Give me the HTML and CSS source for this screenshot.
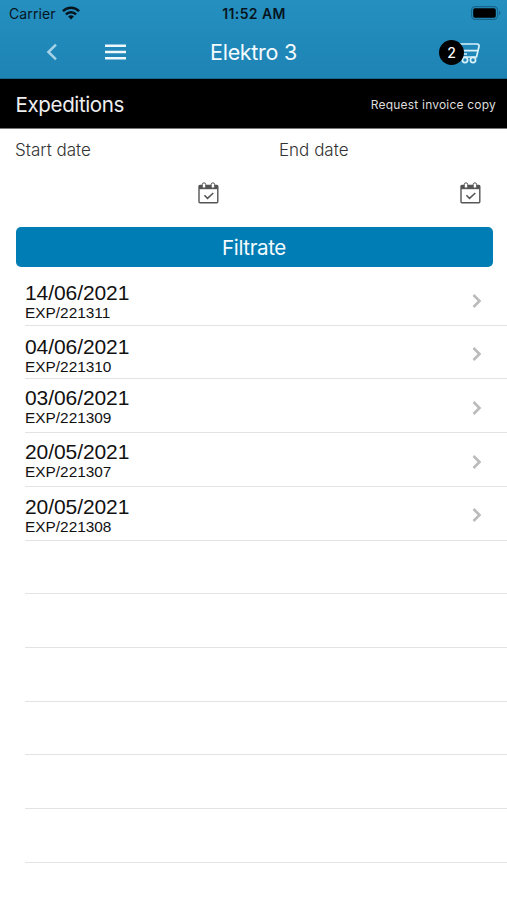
FILE: index.html
```html
<!DOCTYPE html>
<html lang="en">
<head>
<meta charset="utf-8">
<title>Elektro 3</title>
<link rel="stylesheet" href="styles.css">
</head>
<body>
<header class="top">
  <div class="status">
    <div class="carrier"><span>Carrier</span>
      <svg class="wifi" width="18" height="14" viewBox="0 0 18 14"><g fill="none" stroke="#06151d" stroke-width="2.5"><path d="M.9 5.2C5.4.5 12.6.5 17.1 5.2"/><path d="M3.9 8.3C6.7 5.4 11.3 5.4 14.1 8.3"/></g><path d="M6.1 10.5Q9 8 11.9 10.5L9 13.6Z" fill="#06151d"/></svg>
    </div>
    <div class="time">11:52 AM</div>
    <div class="power">
      <svg width="30" height="14" viewBox="0 0 30 14"><rect x=".6" y=".6" width="26" height="12.8" rx="3.6" fill="none" stroke="#17658a" stroke-width="1.1"/><rect x="2.2" y="2.2" width="22.6" height="9.6" rx="1.8"/><path d="M28 4.8q3 2.2 0 4.4z" fill="#17658a"/></svg>
    </div>
  </div>
  <nav class="nav">
    <div class="nav-left">
      <svg class="back" width="12" height="18" viewBox="0 0 12 18"><path d="M10 1.600 2.400 9 10 16.400" fill="none" stroke="#a5d2e6" stroke-width="2.500"/></svg>
      <svg class="menu" width="21" height="16" viewBox="0 0 21 16"><path d="M0 1.800h21M0 8h21M0 14.200h21" stroke="#eef8fc" stroke-width="2.400"/></svg>
    </div>
    <h1>Elektro 3</h1>
    <div class="cart">
      <svg width="28" height="22" viewBox="0 0 28 22"><g fill="none" stroke="#d9f1fa" stroke-width="1.700"><path d="M1 1h3l6 14h14.500L27 4.500Q27.200 2 25 2H6M9 8.700h17M11 12h4"/><circle cx="13" cy="18" r="2.600"/><circle cx="21" cy="18" r="2.600"/></g></svg>
      <span class="badge">2</span>
    </div>
  </nav>
</header>
<div class="bar"><h2>Expeditions</h2><span class="copy">Request invoice copy</span></div>
<section class="filter">
  <div class="field"><label>Start date</label>
    <svg class="cal" width="21" height="22" viewBox="0 0 21 22"><path d="M1 3h19v4.200H1z" fill="#555"/><rect x="1" y="3.500" width="18.800" height="17.300" rx="1" fill="none" stroke="#555" stroke-width="1.400"/><g fill="#fff" stroke="#555"><rect x="4.300" y=".8" width="3.400" height="5.400" rx="1.700"/><rect x="13.200" y=".8" width="3.400" height="5.400" rx="1.700"/></g><path d="m6.400 13.300 3.100 3.100 5.800-5.400" fill="none" stroke="#555" stroke-width="1.500"/></svg>
  </div>
  <div class="field"><label>End date</label>
    <svg class="cal end" width="21" height="22" viewBox="0 0 21 22"><path d="M1 3h19v4.200H1z" fill="#555"/><rect x="1" y="3.500" width="18.800" height="17.300" rx="1" fill="none" stroke="#555" stroke-width="1.400"/><g fill="#fff" stroke="#555"><rect x="4.300" y=".8" width="3.400" height="5.400" rx="1.700"/><rect x="13.200" y=".8" width="3.400" height="5.400" rx="1.700"/></g><path d="m6.400 13.300 3.100 3.100 5.800-5.400" fill="none" stroke="#555" stroke-width="1.500"/></svg>
  </div>
</section>
<button class="submit">Filtrate</button>
<ul class="list">
  <li><div class="entry low"><b>14/06/2021</b><span>EXP/221311</span></div><svg class="go" width="10" height="16" viewBox="0 0 10 16"><path d="m1.500 2 6 6-6 6" /></svg></li>
  <li><div class="entry low"><b>04/06/2021</b><span>EXP/221310</span></div><svg class="go" width="10" height="16" viewBox="0 0 10 16"><path d="m1.500 2 6 6-6 6" /></svg></li>
  <li><div class="entry high"><b>03/06/2021</b><span>EXP/221309</span></div><svg class="go" width="10" height="16" viewBox="0 0 10 16"><path d="m1.500 2 6 6-6 6" /></svg></li>
  <li><div class="entry high"><b>20/05/2021</b><span>EXP/221307</span></div><svg class="go" width="10" height="16" viewBox="0 0 10 16"><path d="m1.500 2 6 6-6 6" /></svg></li>
  <li><div class="entry"><b>20/05/2021</b><span>EXP/221308</span></div><svg class="go" width="10" height="16" viewBox="0 0 10 16"><path d="m1.500 2 6 6-6 6" /></svg></li>
  <li></li><li></li><li></li><li></li><li></li><li></li>
</ul>
</body>
</html>
```
FILE: styles.css
```css
* { box-sizing: border-box; }
body { margin: 0; height: 900px; overflow: hidden; background: #fff; color: #111; font-family: Inter, "Liberation Sans", sans-serif; }
svg { display: block; flex: none; }
h1, h2 { margin: 0; font-weight: 400; }
.top { height: 79px; background: linear-gradient(#2590c0, #1d83b4); border-bottom: 1px solid #14688f; }
.status, .nav { display: grid; grid-template-columns: 1fr auto 1fr; align-items: center; }
.status { height: 27px; padding: 0 8px 0 9px; color: #06151d; }
.carrier { display: flex; align-items: center; gap: 6px; font-size: 14px; letter-spacing: .1px; }
.wifi { margin-top: -2px; }
.time { font-size: 14px; letter-spacing: .4px; font-weight: 600; }
.power { justify-self: end; margin-right: -2px; margin-top: -1px; }
.nav { height: 50px; color: #f4fbfe; }
.nav-left { display: flex; align-items: center; padding-left: 46px; gap: 47px; }
h1 { font-size: 21.5px; letter-spacing: -.3px; padding-bottom: 1px; }
.cart { position: relative; justify-self: end; margin-right: 27px; padding-top: 2px; }
.badge { position: absolute; left: -13px; top: 0; width: 25px; height: 25px; border-radius: 50%; background: #000; color: #fff; font-size: 14px; font-weight: 500; line-height: 25px; text-align: center; }
.bar { height: 50px; background: #000; border-bottom: 1px solid #777; color: #eee; display: flex; align-items: center; justify-content: space-between; padding: 2px 11px 0 15.5px; }
h2 { font-size: 20.6px; letter-spacing: -.4px; }
.copy { font-size: 12px; letter-spacing: .2px; color: #ddd; }
.filter { display: grid; grid-template-columns: 264px 1fr; height: 98px; padding: 0 0 0 15px; }
.field { padding-top: 10px; color: #333; }
.field label { display: block; font-size: 17px; line-height: 22px; font-weight: 300; }
.cal { margin: 21px 0 0 183px; }
.cal.end { margin-left: 181px; }
.submit { display: block; width: 477px; height: 40px; margin: 0 0 0 15.5px; padding: 1px 0 0; border: 0; border-radius: 5px; background: #007db4; color: #f4fbff; font: 400 20.6px Inter, sans-serif; letter-spacing: -.4px; }
.list { list-style: none; margin: 5px 0 0 25px; padding: 0; font-family: "Liberation Sans", Arial, sans-serif; }
.list li { height: 53.73px; border-bottom: 1.500px solid #e3e3e3; display: flex; align-items: flex-start; justify-content: space-between; padding-right: 25px; }
.entry { padding-top: 9.5px; }
.entry.low { padding-top: 10px; }
.entry.high { padding-top: 8px; }
.entry b, .entry span { display: block; font-weight: 400; }
.entry b { font-size: 21px; line-height: 22px; letter-spacing: -.08px; }
.entry span { font-size: 15.400px; line-height: 18px; }
.go { margin-top: 20.5px; fill: none; stroke: #bbb; stroke-width: 2.600px; }
```
